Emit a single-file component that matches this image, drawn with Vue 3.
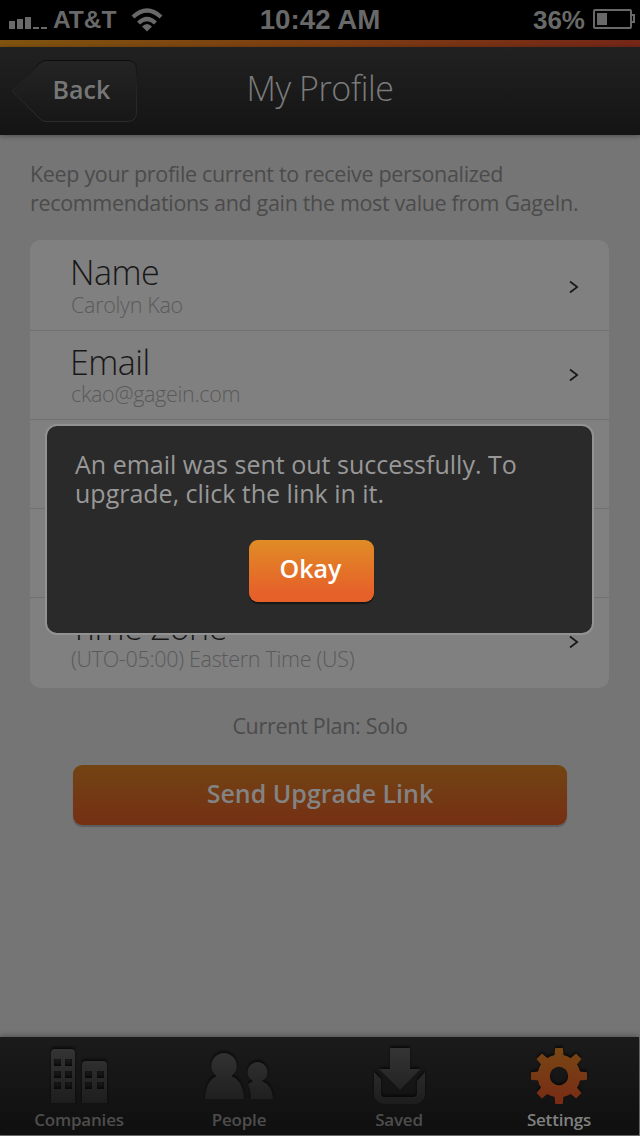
<script setup>
const rows = [
  { title: 'Name', value: 'Carolyn Kao' },
  { title: 'Email', value: 'ckao@gagein.com' },
  { title: '', value: '' },
  { title: '', value: '' },
  { title: 'Time Zone', value: '(UTO-05:00) Eastern Time (US)' },
]
const teeth = [0, 45, 90, 135, 180, 225, 270, 315]
</script>

<template>
  <div class="screen">
    <header class="status">
      <div class="carrier">
        <svg class="bars" width="38" height="13" viewBox="0 0 38 13" fill="#696969">
          <rect x="0" y="5" width="6" height="8" /><rect x="8" y="3" width="6" height="10" />
          <rect x="16" y="1" width="6" height="12" /><rect x="24" y="11" width="6" height="2" />
          <rect x="32" y="11" width="6" height="2" />
        </svg>
        <span class="att">AT&amp;T</span>
        <svg class="wifi" width="32" height="24" viewBox="0 0 32 24" fill="none" stroke="#696969" stroke-width="4.2">
          <path d="M2 9 Q16 -4 30 9" />
          <path d="M7.500 15 Q16 7 24.500 15" />
          <path d="M11 18.500 Q16 13.500 21 18.500 L16 23.500Z" fill="#696969" stroke="none" />
        </svg>
      </div>
      <span class="clock">10:42 AM</span>
      <div class="power">
        <span class="percent">36%</span>
        <svg width="42" height="20" viewBox="0 0 42 20" fill="none" stroke="#696969" stroke-width="2">
          <rect x="1" y="1" width="37" height="18" rx="1" />
          <path d="M38 6h3v7h-3" />
          <rect x="4" y="4" width="10" height="12" fill="#696969" stroke="none" />
        </svg>
      </div>
    </header>
    <div class="stripe"></div>

    <nav class="nav">
      <div class="back">
        <svg class="back-shape" width="127" height="64" viewBox="0 0 127 64">
          <defs>
            <linearGradient id="backFill" x1="0" y1="0" x2="0" y2="1">
              <stop offset="0" stop-color="#242424" /><stop offset="1" stop-color="#171717" />
            </linearGradient>
            <linearGradient id="backEdge" x1="0" y1="0" x2="0" y2="1">
              <stop offset="0" stop-color="#0d0d0d" /><stop offset=".15" stop-color="#171717" />
              <stop offset=".5" stop-color="#262626" /><stop offset="1" stop-color="#2b2b2b" />
            </linearGradient>
          </defs>
          <path d="M29 4Q32 1.500 35 1.500H116Q125.500 1.500 125.500 11V53Q125.500 62.500 116 62.500H35Q31.500 62.500 28 59L1 32Z" fill="url(#backFill)" stroke="url(#backEdge)" />
        </svg>
        <span class="back-label">Back</span>
      </div>
      <h1>My Profile</h1>
    </nav>

    <main class="content">
      <div class="intro">
        <p>Keep your profile current to receive personalized</p>
        <p>recommendations and gain the most value from GageIn.</p>
      </div>
      <ul class="card">
        <li v-for="(row, i) in rows" :key="i" class="row" :class="'row-' + (i + 1)">
          <div class="row-text">
            <div class="row-title">{{ row.title }}</div>
            <div class="row-value">{{ row.value }}</div>
          </div>
          <svg class="chevron" width="10" height="14" viewBox="0 0 10 14" fill="none" stroke="#181818" stroke-width="1.700">
            <path d="M1 1.500L8.200 7L1 12.500" />
          </svg>
        </li>
      </ul>
      <p class="plan">Current Plan: Solo</p>
      <div class="send">Send Upgrade Link</div>
    </main>

    <footer class="tabs">
      <svg width="0" height="0" class="defs">
        <defs>
          <linearGradient id="iconFill" gradientUnits="userSpaceOnUse" x1="0" y1="0" x2="0" y2="60">
            <stop offset="0" stop-color="#363636" /><stop offset="1" stop-color="#1d1d1d" />
          </linearGradient>
          <linearGradient id="gearFill" gradientUnits="userSpaceOnUse" x1="0" y1="4" x2="0" y2="60">
            <stop offset="0" stop-color="#784713" /><stop offset="1" stop-color="#782b15" />
          </linearGradient>
        </defs>
      </svg>
      <div class="tab">
        <svg class="icon" width="80" height="62" viewBox="0 0 80 62" fill="url(#iconFill)" fill-rule="evenodd">
          <path d="M12 59V9Q12 5 16 5H32Q36 5 36 9V59ZM15 15v7h7v-7zM26 15v7h7v-7zM15 27v7h7v-7zM26 27v7h7v-7zM15 38v7h7v-7zM26 38v7h7v-7z" />
          <path d="M43 59V21Q43 17 47 17H64Q68 17 68 21V59ZM46 27v7h7v-7zM58 27v7h7v-7zM46 38v7h7v-7zM58 38v7h7v-7z" />
        </svg>
        <span>Companies</span>
      </div>
      <div class="tab">
        <svg class="icon" width="80" height="62" viewBox="0 0 80 62" fill="url(#iconFill)">
          <path d="M17.500 32A12.700 12.700 0 1 1 32.500 32Q44.500 37 45 55H6Q6.500 37 17.500 32Z" />
          <path d="M54 37A10 10 0 1 1 63 37Q73.500 41 74 55H52Q52 47 49 40.500Q50.500 38.500 54 37Z" />
        </svg>
        <span>People</span>
      </div>
      <div class="tab">
        <svg class="icon" width="80" height="62" viewBox="0 0 80 62" fill="url(#iconFill)">
          <path d="M31 4H51V25H61.500L41 46L20 25H31Z" />
          <path d="M15 28L22 35V49Q22 53 26 53H54Q58 53 58 49V37L66 28V51Q66 54 63.500 56.500Q60 60 56 60H25Q21 60 18 57Q15 54 15 51Z" />
        </svg>
        <span>Saved</span>
      </div>
      <div class="tab active">
        <svg class="icon" width="80" height="62" viewBox="0 0 80 62">
          <mask id="gear" maskUnits="userSpaceOnUse" x="0" y="0" width="80" height="62">
            <circle cx="40" cy="32" r="21.500" fill="#fff" />
            <path v-for="t in teeth" :key="t" d="M35.200 14L36.200 4H43.800L44.800 14Z" fill="#fff" :transform="`rotate(${t} 40 32)`" />
            <circle cx="40" cy="32" r="9.200" fill="#000" />
          </mask>
          <rect width="80" height="62" fill="url(#gearFill)" mask="url(#gear)" />
        </svg>
        <span>Settings</span>
      </div>
    </footer>

    <section class="dialog">
      <p>An email was sent out successfully. To</p>
      <p>upgrade, click the link in it.</p>
      <div class="okay">Okay</div>
    </section>
  </div>
</template>

<style>
body { margin: 0; background: #757575; }
</style>

<style scoped>
.screen { position: relative; width: 640px; height: 1136px; overflow: hidden; display: flex; flex-direction: column; background: #757575; font-family: "Open Sans", "Noto Sans", sans-serif; }
p, h1, ul { margin: 0; padding: 0; }
.status { height: 40px; flex: none; background: #000; color: #696969; display: grid; grid-template-columns: 1fr auto 1fr; font-family: "Liberation Sans", Arial, sans-serif; font-weight: 700; line-height: 39px; }
.carrier { display: flex; padding-left: 9px; align-items: flex-start; }
.bars { margin-top: 16px; }
.att { margin-left: 6px; width: 63px; font-size: 24.500px; line-height: 40px; white-space: nowrap; }
.wifi { margin: 8px 0 0 15px; }
.clock { font-size: 27.700px; white-space: nowrap; }
.power { display: flex; justify-content: flex-end; padding-right: 5px; }
.percent { font-size: 26px; line-height: 40px; margin-right: 8px; }
.power svg { margin-top: 9px; }
.stripe { height: 7px; flex: none; background: linear-gradient(90deg, #80540f, #7d3e12 50%, #752718); }
.nav { position: relative; z-index: 1; height: 88px; flex: none; display: grid; grid-template-columns: 1fr auto 1fr; background: linear-gradient(#212121, #141414); box-shadow: 0 1px 5px rgba(0, 0, 0, .35); }
.back { position: relative; margin: 12px 0 0 11px; width: 127px; height: 64px; }
.back-shape { display: block; }
.back-label { position: absolute; left: 41.500px; top: 13px; font-size: 25px; line-height: 34px; font-weight: 600; color: #777; }
h1 { font-size: 34px; line-height: 46px; padding-top: 18px; font-weight: 300; letter-spacing: -.4px; color: #7b7b7b; white-space: nowrap; }
.content { flex: 1; display: flex; flex-direction: column; }
.intro { padding: 24px 0 0 30px; font-size: 21.500px; line-height: 29px; letter-spacing: -.33px; color: #4b4b4b; white-space: nowrap; }
.card { list-style: none; margin: 23px 31px 0 30px; border-radius: 10px; background: #808080; height: 448px; flex: none; }
.row { box-sizing: border-box; height: 89px; display: flex; justify-content: space-between; padding: 14px 30px 0 40px; border-bottom: 1px solid #717171; }
.row-1 { height: 91px; padding-top: 15px; }
.row-5 { height: 90px; padding-top: 12px; border-bottom: 0; }
.row-title { font-size: 34px; line-height: 34px; height: 34px; font-weight: 300; letter-spacing: -.5px; color: #181818; }
.row-value { margin-top: 1px; padding-left: 1px; font-size: 21.500px; line-height: 28px; font-weight: 300; letter-spacing: -.3px; color: #5a5a5a; }
.row-1 .row-value { margin-top: 2px; }
.chevron { margin-top: 23px; }
.row-1 .chevron, .row-5 .chevron { margin-top: 25px; }
.plan { margin-top: 24px; text-align: center; font-size: 21.500px; line-height: 28px; letter-spacing: -.3px; color: #4b4b4b; }
.send { margin: 25px 73px 0; height: 60px; line-height: 56px; border-radius: 9px; text-align: center; font-size: 25px; font-weight: 600; color: #838383; background: linear-gradient(#724413, #752f14); box-shadow: 0 2px 1px rgba(0, 0, 0, .2); }
.tabs { position: relative; height: 98px; flex: none; margin: 0 1px 1px 0; display: grid; grid-template-columns: repeat(4, 160px); background: linear-gradient(#1b1b1b, #0f0f0f); box-shadow: 0 -1px 6px rgba(0, 0, 0, .35); }
.defs { position: absolute; }
.tab { display: flex; flex-direction: column; align-items: center; padding-right: 2px; font-size: 17px; line-height: 24px; font-weight: 600; letter-spacing: -.2px; color: #4d4d4d; }
.icon { margin-top: 7px; filter: drop-shadow(0 -2px 1px rgba(0, 0, 0, .6)); }
.tab span { margin-top: 2px; }
.active { color: #808080; }
.dialog { position: absolute; z-index: 2; left: 45px; top: 424px; box-sizing: border-box; width: 549px; height: 211px; border: 2px solid #929292; border-radius: 12px; background: #2a2a2a; color: #989898; padding: 24px 0 0 28px; }
.dialog p { font-size: 25px; line-height: 29px; white-space: nowrap; }
.okay { box-sizing: border-box; padding-right: 2px; margin: 32px 0 0 174px; width: 125px; height: 62px; line-height: 56px; text-align: center; border-radius: 9px; font-size: 25px; font-weight: 600; color: #fff; background: linear-gradient(#e08c25, #e6612a 85%); box-shadow: 0 2px 1px rgba(0, 0, 0, .45); }
</style>
